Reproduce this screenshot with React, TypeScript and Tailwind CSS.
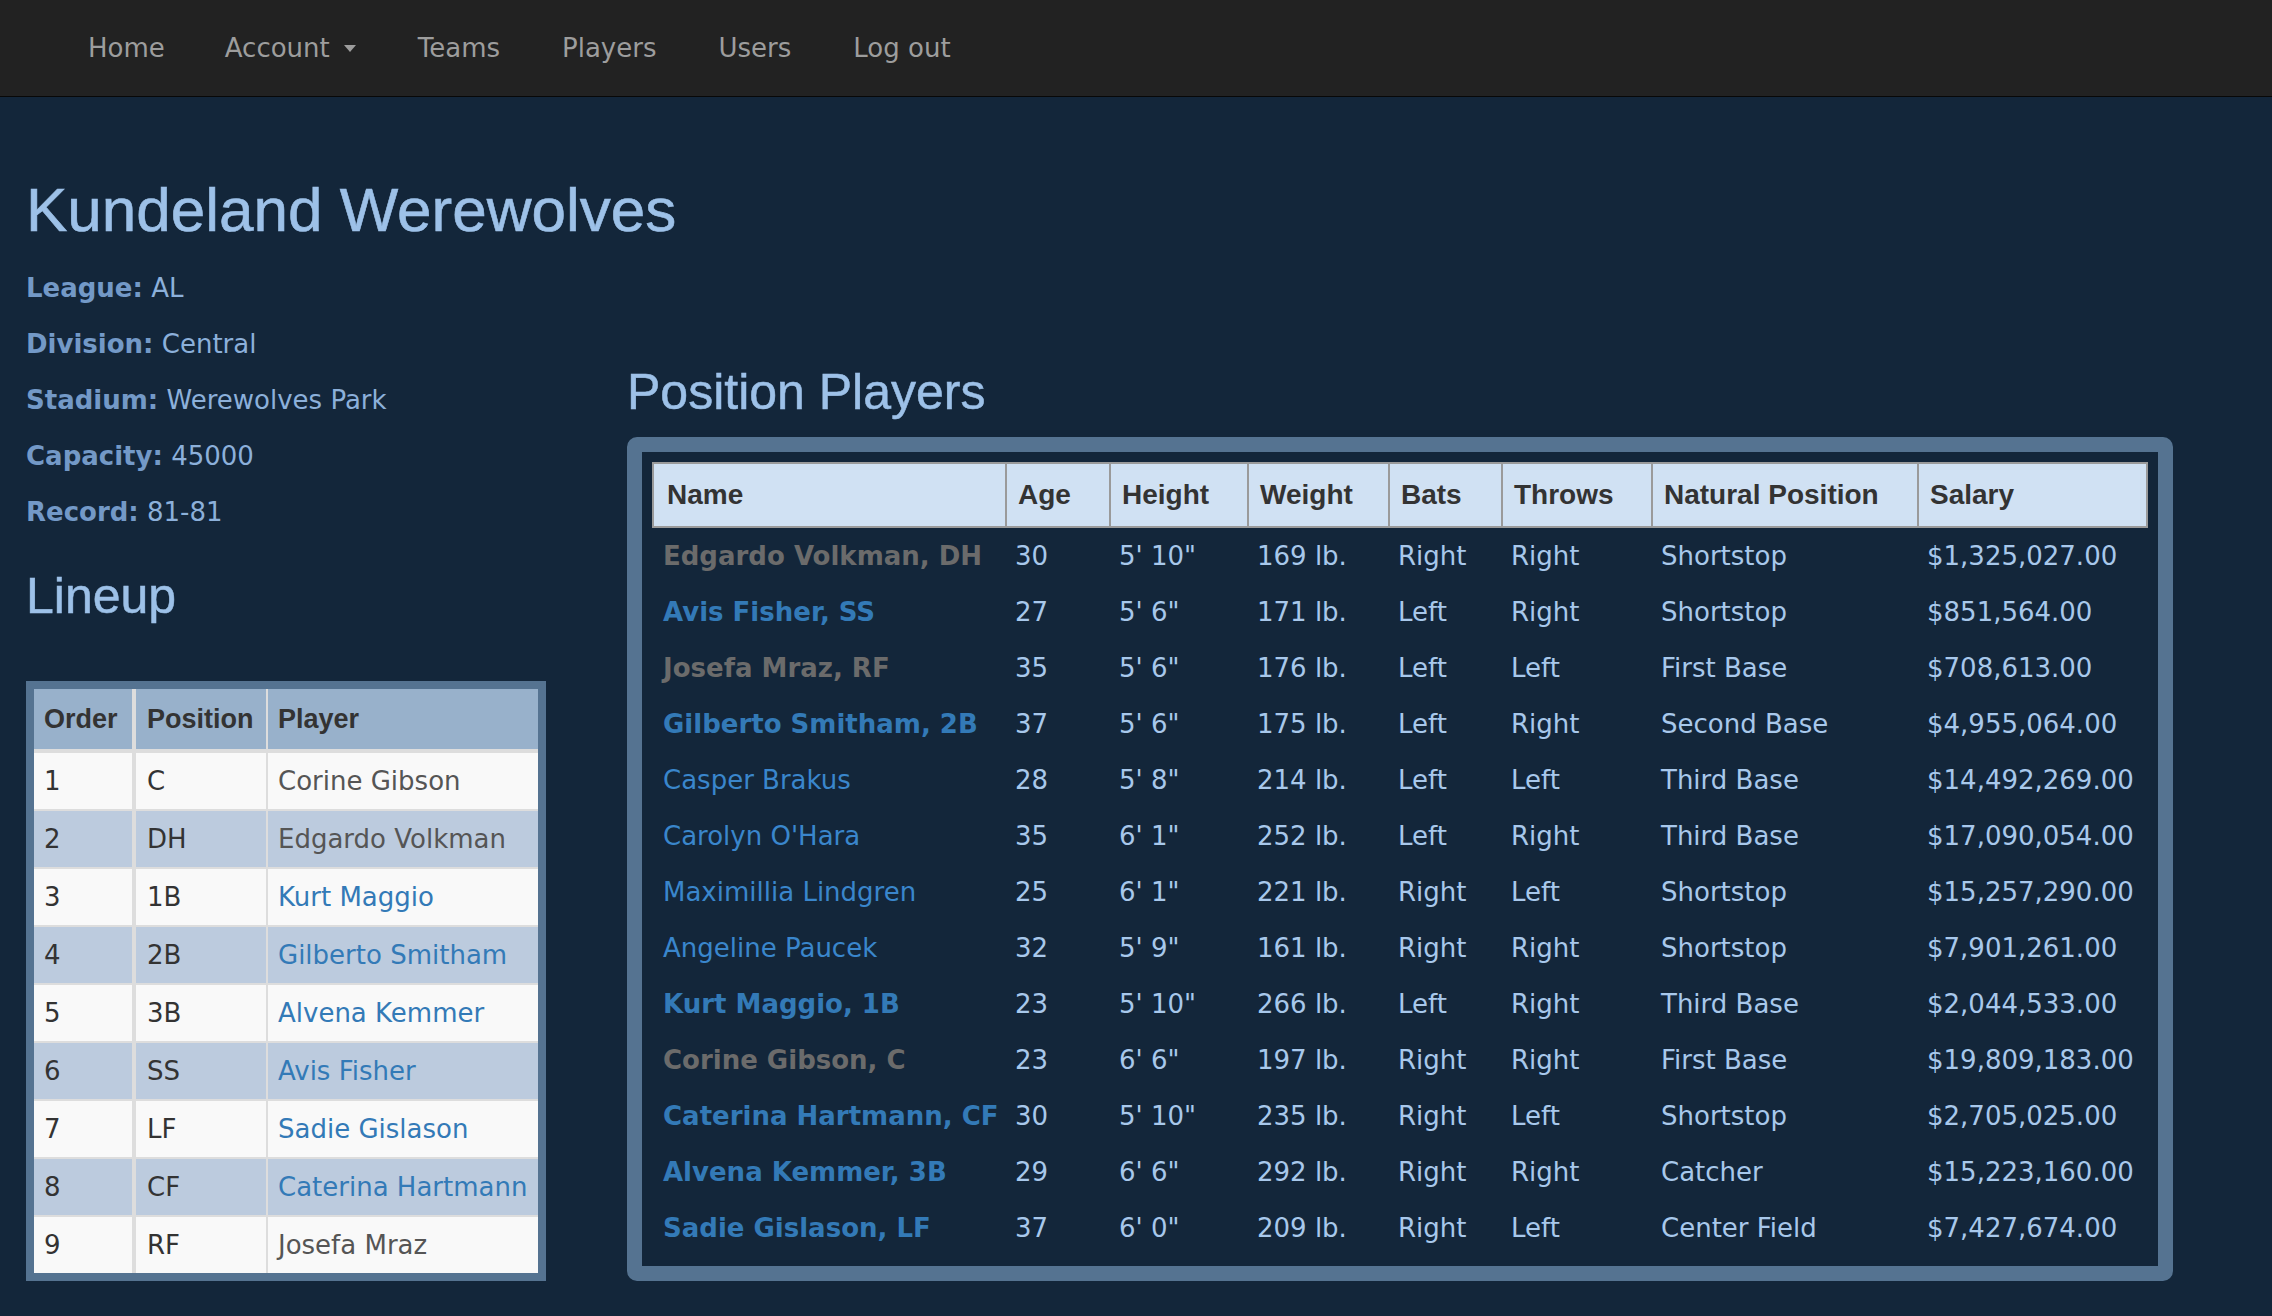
import React from 'react';

type Player = {
  name: string;
  age: string;
  height: string;
  weight: string;
  bats: string;
  throws: string;
  pos: string;
  salary: string;
  style: 'gray' | 'blue' | 'link';
};

const players: Player[] = [
  { name: 'Edgardo Volkman, DH', age: '30', height: `5' 10"`, weight: '169 lb.', bats: 'Right', throws: 'Right', pos: 'Shortstop', salary: '$1,325,027.00', style: 'gray' },
  { name: 'Avis Fisher, SS', age: '27', height: `5' 6"`, weight: '171 lb.', bats: 'Left', throws: 'Right', pos: 'Shortstop', salary: '$851,564.00', style: 'blue' },
  { name: 'Josefa Mraz, RF', age: '35', height: `5' 6"`, weight: '176 lb.', bats: 'Left', throws: 'Left', pos: 'First Base', salary: '$708,613.00', style: 'gray' },
  { name: 'Gilberto Smitham, 2B', age: '37', height: `5' 6"`, weight: '175 lb.', bats: 'Left', throws: 'Right', pos: 'Second Base', salary: '$4,955,064.00', style: 'blue' },
  { name: 'Casper Brakus', age: '28', height: `5' 8"`, weight: '214 lb.', bats: 'Left', throws: 'Left', pos: 'Third Base', salary: '$14,492,269.00', style: 'link' },
  { name: "Carolyn O'Hara", age: '35', height: `6' 1"`, weight: '252 lb.', bats: 'Left', throws: 'Right', pos: 'Third Base', salary: '$17,090,054.00', style: 'link' },
  { name: 'Maximillia Lindgren', age: '25', height: `6' 1"`, weight: '221 lb.', bats: 'Right', throws: 'Left', pos: 'Shortstop', salary: '$15,257,290.00', style: 'link' },
  { name: 'Angeline Paucek', age: '32', height: `5' 9"`, weight: '161 lb.', bats: 'Right', throws: 'Right', pos: 'Shortstop', salary: '$7,901,261.00', style: 'link' },
  { name: 'Kurt Maggio, 1B', age: '23', height: `5' 10"`, weight: '266 lb.', bats: 'Left', throws: 'Right', pos: 'Third Base', salary: '$2,044,533.00', style: 'blue' },
  { name: 'Corine Gibson, C', age: '23', height: `6' 6"`, weight: '197 lb.', bats: 'Right', throws: 'Right', pos: 'First Base', salary: '$19,809,183.00', style: 'gray' },
  { name: 'Caterina Hartmann, CF', age: '30', height: `5' 10"`, weight: '235 lb.', bats: 'Right', throws: 'Left', pos: 'Shortstop', salary: '$2,705,025.00', style: 'blue' },
  { name: 'Alvena Kemmer, 3B', age: '29', height: `6' 6"`, weight: '292 lb.', bats: 'Right', throws: 'Right', pos: 'Catcher', salary: '$15,223,160.00', style: 'blue' },
  { name: 'Sadie Gislason, LF', age: '37', height: `6' 0"`, weight: '209 lb.', bats: 'Right', throws: 'Left', pos: 'Center Field', salary: '$7,427,674.00', style: 'blue' },
];

const lineup = [
  { order: '1', pos: 'C', name: 'Corine Gibson', link: false },
  { order: '2', pos: 'DH', name: 'Edgardo Volkman', link: false },
  { order: '3', pos: '1B', name: 'Kurt Maggio', link: true },
  { order: '4', pos: '2B', name: 'Gilberto Smitham', link: true },
  { order: '5', pos: '3B', name: 'Alvena Kemmer', link: true },
  { order: '6', pos: 'SS', name: 'Avis Fisher', link: true },
  { order: '7', pos: 'LF', name: 'Sadie Gislason', link: true },
  { order: '8', pos: 'CF', name: 'Caterina Hartmann', link: true },
  { order: '9', pos: 'RF', name: 'Josefa Mraz', link: false },
];

const info = [
  ['League:', 'AL'],
  ['Division:', 'Central'],
  ['Stadium:', 'Werewolves Park'],
  ['Capacity:', '45000'],
  ['Record:', '81-81'],
];

const nameClass = {
  gray: 'font-bold text-[#6b6b6b]',
  blue: 'font-bold text-[#337ab7]',
  link: 'text-[#3a86cc]',
};

export default function App() {
  return (
    <div className="min-h-screen bg-[#13263a] font-['DejaVu_Sans',Verdana,sans-serif] text-[26px]">
      {/* Navbar */}
      <nav className="h-[97px] bg-[#222222] border-b border-[#080808] flex items-center pl-[58px] text-[#9d9d9d]">
        <a className="px-[30px] leading-[36px]">Home</a>
        <a className="pl-[30px] pr-[31px] leading-[36px] flex items-center">
          Account
          <span className="ml-[14px] w-0 h-0 border-t-[7px] border-t-[#9d9d9d] border-x-[6px] border-x-transparent" />
        </a>
        <a className="px-[31px] leading-[36px]">Teams</a>
        <a className="px-[31px] leading-[36px]">Players</a>
        <a className="px-[31px] leading-[36px]">Users</a>
        <a className="px-[31px] leading-[36px]">Log out</a>
      </nav>

      <main className="px-[26px]">
        <h1 className="mt-[79px] font-['Liberation_Sans',Arial,sans-serif] text-[62px] leading-[68px] text-[#9dc1e8] [-webkit-text-stroke:0.6px]">
          Kundeland Werewolves
        </h1>

        <div className="flex mt-[26px]">
          {/* Left column */}
          <div className="w-[520px] shrink-0">
            {info.map(([label, value]) => (
              <p key={label} className="leading-[36px] mb-[20px] text-[#8cb0da]">
                <b className="text-[#7399c7]">{label}</b> {value}
              </p>
            ))}

            <h3 className="mt-[40px] font-['Liberation_Sans',Arial,sans-serif] text-[50px] leading-[53px] text-[#9dc1e8] [-webkit-text-stroke:0.5px]">
              Lineup
            </h3>

            <div className="mt-[58px] border-8 border-[#557391]">
              <div className="flex h-[64px] border-b-4 border-[#dddddd] bg-[#98b1cb] font-['Liberation_Sans',Arial,sans-serif] font-bold text-[27px] text-[#333333]">
                <div className="w-[102px] border-r-4 border-[#dddddd] pl-[10px] flex items-center">Order</div>
                <div className="w-[132px] border-r-2 border-[#dddddd] pl-[11px] flex items-center">Position</div>
                <div className="flex-1 pl-[10px] flex items-center">Player</div>
              </div>
              {lineup.map((r, i) => (
                <div
                  key={r.order}
                  className={`flex text-[#333333] ${i % 2 === 0 ? 'bg-[#f9f9f9]' : 'bg-[#bccbde]'} ${
                    i < lineup.length - 1 ? 'h-[58px] border-b-2 border-[#dddddd]' : 'h-[56px]'
                  }`}
                >
                  <div className="w-[102px] border-r-4 border-[#dddddd] pl-[10px] flex items-center">{r.order}</div>
                  <div className="w-[132px] border-r-2 border-[#dddddd] pl-[11px] flex items-center">{r.pos}</div>
                  <div className={`flex-1 pl-[10px] flex items-center whitespace-nowrap ${r.link ? 'text-[#337ab7]' : 'text-[#555555]'}`}>
                    {r.name}
                  </div>
                </div>
              ))}
            </div>
          </div>

          {/* Right column */}
          <div className="ml-[81px] w-[1546px] pt-[96px]">
            <h3 className="font-['Liberation_Sans',Arial,sans-serif] text-[50px] leading-[53px] text-[#9dc1e8] [-webkit-text-stroke:0.5px]">
              Position Players
            </h3>

            <div className="mt-[18px] border-[15px] border-[#557391] rounded-[10px] p-[10px]">
              <div className="flex h-[66px] border-y-2 border-[#9a9a9a] bg-[#d0e1f3] font-['Liberation_Sans',Arial,sans-serif] font-bold text-[28px] text-[#333333]">
                <div className="w-[353px] border-l-2 border-[#9a9a9a] pl-[13px] flex items-center">Name</div>
                <div className="w-[104px] border-l-2 border-[#9a9a9a] pl-[11px] flex items-center">Age</div>
                <div className="w-[138px] border-l-2 border-[#9a9a9a] pl-[11px] flex items-center">Height</div>
                <div className="w-[141px] border-l-2 border-[#9a9a9a] pl-[11px] flex items-center">Weight</div>
                <div className="w-[113px] border-l-2 border-[#9a9a9a] pl-[11px] flex items-center">Bats</div>
                <div className="w-[150px] border-l-2 border-[#9a9a9a] pl-[11px] flex items-center">Throws</div>
                <div className="w-[266px] border-l-2 border-[#9a9a9a] pl-[11px] flex items-center">Natural Position</div>
                <div className="w-[231px] border-x-2 border-[#9a9a9a] pl-[11px] flex items-center">Salary</div>
              </div>
              {players.map((p) => (
                <div key={p.name} className="flex h-[56px] items-center whitespace-nowrap text-[#a8c8eb]">
                  <div className={`w-[353px] pl-[11px] ${nameClass[p.style]}`}>{p.name}</div>
                  <div className="w-[104px] pl-[10px]">{p.age}</div>
                  <div className="w-[138px] pl-[10px]">{p.height}</div>
                  <div className="w-[141px] pl-[10px]">{p.weight}</div>
                  <div className="w-[113px] pl-[10px]">{p.bats}</div>
                  <div className="w-[150px] pl-[10px]">{p.throws}</div>
                  <div className="w-[266px] pl-[10px]">{p.pos}</div>
                  <div className="w-[231px] pl-[10px]">{p.salary}</div>
                </div>
              ))}
            </div>
          </div>
        </div>
      </main>
    </div>
  );
}
